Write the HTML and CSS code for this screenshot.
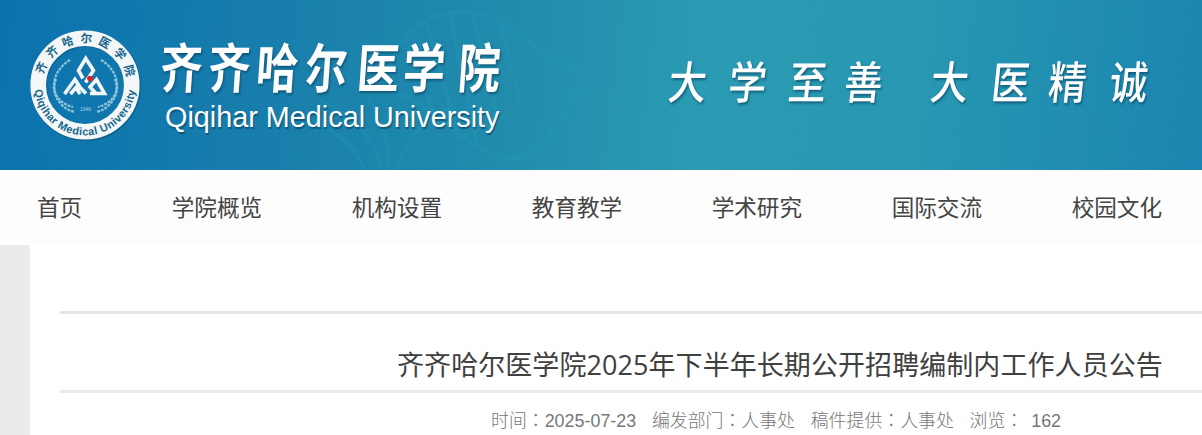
FILE: index.html
```html
<!DOCTYPE html>
<html lang="zh-CN">
<head>
  <meta charset="UTF-8">
  <meta name="viewport" content="width=device-width, initial-scale=1.0">
  <title>齐齐哈尔医学院</title>
  <link rel="stylesheet" href="styles.css">
</head>
<body>
  <header class="header">
    <!-- DNA background -->
    <svg class="helix" width="340" height="170" viewBox="0 0 340 170" fill="none" stroke="#1fa0c0" stroke-width="4">
      <path d="M90 66C105 22 140 8 180 13C225 24 238 66 280 66"/>
      <path d="M90 90C140 106 170 160 215 158C255 150 260 110 280 85"/>
      <path d="M105 38L140 128M125 20L160 142M150 13L178 148M173 13L198 120M200 22L222 110"/>
      <path d="M0 115C30 125 55 145 65 170M20 100C55 115 75 140 82 170M60 85C80 110 90 140 88 170M150 108C120 120 102 145 98 170"/>
    </svg>
    <div class="brand">
      <svg class="logo" width="112" height="114" viewBox="29 28 112 114">
        <defs>
          <path id="ring-top" d="M42.500 85A42.500 42.500 0 0 1 127.500 85"/>
          <path id="ring-bottom" d="M34.500 85A50.500 50.500 0 0 0 135.500 85"/>
        </defs>
        <circle cx="86" cy="86" r="47" fill="none" stroke="#0c4a6b" stroke-opacity=".45" stroke-width="16"/>
        <circle cx="85" cy="85" r="46.800" fill="none" stroke="#f4f7f8" stroke-width="15.600"/>
        <text class="ring-cn"><textPath href="#ring-top" startOffset="10">齐齐哈尔医学院</textPath></text>
        <text class="ring-en"><textPath href="#ring-bottom" startOffset="5" textLength="148">Qiqihar Medical University</textPath></text>
        <g fill="none" stroke="#f4f7f8" stroke-width="3.600">
          <path d="M83 78.500L78.500 70.500L85.700 58.500L93.500 70.500L85.500 82.500"/>
          <path d="M64.500 94L75 79.500L80.500 88L86 93.500M70.500 94L76 87.500L80 94"/>
          <path d="M90 93.500H104.500L96.500 79.500L90 87L96 93.500"/>
        </g>
        <circle cx="90" cy="78.500" r="2.800" fill="#f01818"/>
        <g fill="none" stroke="#8fc4da" stroke-width="2.200" stroke-dasharray="3 1">
          <path d="M70 60C53 70 48 91 62 105C66 109 70 111 75 112"/>
          <path d="M101 60C118 70 123 91 109 105C105 109 101 111 96 112"/>
          <path d="M56 79C51 92 58 103 73 107"/>
          <path d="M115 79C120 92 113 103 98 107"/>
        </g>
        <text class="year" x="85.500" y="111">1946</text>
      </svg>
      <div class="names">
        <svg class="name-cn" width="350" height="60" viewBox="160 37 350 60">
          <text transform="translate(-1 88) skewX(-4) scale(1 1.27)" x="160 208 256 305 357 403 458">齐齐哈尔医学院</text>
        </svg>
        <div class="name-en">Qiqihar Medical University</div>
      </div>
    </div>
    <svg class="motto" width="500" height="60" viewBox="662 52 500 60">
      <text transform="translate(0 99) skewX(-6) scale(1 1.18)" x="667 727 787 843 929 990 1047 1108">大学至善大医精诚</text>
    </svg>
  </header>

  <nav class="nav">
    <a>首页</a>
    <a>学院概览</a>
    <a>机构设置</a>
    <a>教育教学</a>
    <a>学术研究</a>
    <a>国际交流</a>
    <a>校园文化</a>
  </nav>

  <main class="page">
    <article class="content">
      <h1 class="title">齐齐哈尔医学院2025年下半年长期公开招聘编制内工作人员公告</h1>
      <div class="info" lang="zh-TW">
        <span>时间：2025-07-23</span>
        <span>编发部门：人事处</span>
        <span>稿件提供：人事处</span>
        <span>浏览：<span class="hits">162</span></span>
      </div>
    </article>
  </main>
</body>
</html>
```
FILE: styles.css
```css
body {
  margin: 0;
  width: 1202px;
  height: 435px;
  overflow: hidden;
  background: #ebebeb;
  font-family: "Noto Sans CJK SC", sans-serif;
}

.header {
  position: relative;
  display: flex;
  justify-content: space-between;
  box-sizing: border-box;
  height: 170px;
  padding: 28px 40px 0 29px;
  background: linear-gradient(97deg, #0b72af 0%, #187fac 24%, #218cac 42%, #2a9bb2 58%, #2898b2 75%, #1a85b0 100%);
}

.helix {
  position: absolute;
  left: 300px;
  top: 0;
  opacity: 0.22;
}

.brand {
  display: flex;
  position: relative;
}

.logo {
  display: block;
}

.ring-cn {
  font-size: 11.5px;
  font-weight: 700;
  letter-spacing: 5.8px;
  fill: #17678c;
}

.ring-en {
  font-family: "Liberation Sans", Arial, sans-serif;
  font-size: 11px;
  font-weight: 700;
  fill: #17678c;
}

.year {
  font-family: "Liberation Sans", Arial, sans-serif;
  font-size: 5px;
  text-anchor: middle;
  fill: #a6d0e2;
}

.names {
  padding: 9px 0 0 19px;
}

.name-cn {
  display: block;
  overflow: visible;
  font-size: 42px;
  font-weight: 700;
  fill: #fff;
  filter: drop-shadow(1px 2px 1px rgba(10, 60, 90, 0.6));
}

.name-en {
  margin-left: 5px;
  font-family: "Liberation Sans", Arial, sans-serif;
  font-size: 28.8px;
  line-height: 40px;
  color: #fff;
  white-space: nowrap;
  text-shadow: 1px 2px 1px rgba(10, 60, 90, 0.6);
}

.motto {
  position: relative;
  margin-top: 24px;
  overflow: visible;
  font-size: 38px;
  font-weight: 500;
  fill: #fff;
  filter: drop-shadow(1px 2px 1px rgba(10, 60, 90, 0.6));
}

.nav {
  display: flex;
  gap: 89.6px;
  height: 75px;
  padding-left: 37px;
  background: #fdfdfd;
}

.nav a {
  font-size: 22.6px;
  line-height: 73px;
  color: #444;
  white-space: nowrap;
}

.page {
  box-sizing: border-box;
  height: 190px;
  margin-left: 30px;
  padding: 66px 0 0 30px;
  background: #fff;
}

.content {
  border-top: 3px solid #e5e5e5;
}

.title {
  height: 76px;
  margin: 0;
  padding-left: 337px;
  border-bottom: 3px solid #ebebeb;
  font-family: "Open Sans", "Noto Sans CJK SC", sans-serif;
  font-size: 27px;
  font-weight: 400;
  line-height: 101px;
  letter-spacing: 0.07px;
  color: #404040;
  white-space: nowrap;
}

.info {
  display: flex;
  gap: 15.7px;
  height: 42px;
  padding-left: 431px;
  overflow: hidden;
  font-family: "Liberation Sans", "Noto Sans CJK TC", sans-serif;
  font-size: 17.9px;
  font-weight: 300;
  line-height: 56px;
  color: #777;
  white-space: pre;
}

.hits {
  margin-left: 8px;
}
```
